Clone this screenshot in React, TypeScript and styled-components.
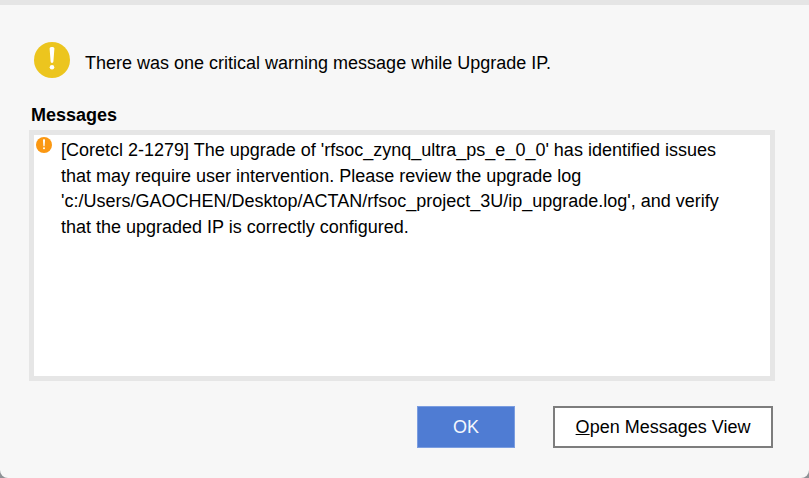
import React from "react";
import styled, { createGlobalStyle } from "styled-components";

const Global = createGlobalStyle`
  html, body { margin: 0; padding: 0; background: #8f9296; }
  #root { width: 809px; height: 478px; overflow: hidden; }
`;

const Dialog = styled.div`
  box-sizing: border-box;
  width: 809px;
  height: 478px;
  background: #f7f7f7;
  border-top: 5px solid #e5e5e5;
  border-radius: 0 0 8px 8px;
  font-family: "Liberation Sans", Arial, sans-serif;
  font-size: 18px;
  color: #000;
  padding: 37px 34px 0 29px;
  display: flex;
  flex-direction: column;
`;

const Header = styled.div`
  display: flex;
  align-items: center;
  gap: 15px;
  height: 36px;
  padding-left: 5px;
`;

const HeaderText = styled.span`
  line-height: 20px;
  position: relative;
  top: 3px;
`;

const SectionTitle = styled.div`
  font-weight: 700;
  line-height: 20px;
  margin-top: 27px;
  padding-left: 2px;
  height: 25px;
`;

const MessagePanel = styled.div`
  box-sizing: border-box;
  height: 251px;
  background: #fff;
  border: 5px solid #e6e6e6;
  padding: 2px 40px 0 2px;
  display: flex;
  gap: 9px;
`;

const MessageIcon = styled.div`
  flex: none;
  width: 16px;
  height: 16px;
`;

const MessageText = styled.div`
  padding-top: 1px;
  line-height: 25.5px;
  white-space: pre-line;
`;

const Footer = styled.div`
  display: flex;
  justify-content: flex-end;
  gap: 38px;
  margin-top: 25px;
  padding-right: 2px;
`;

const BaseButton = styled.button`
  box-sizing: border-box;
  height: 42px;
  padding: 0;
  font-family: inherit;
  font-size: 18px;
  cursor: pointer;
`;

const PrimaryButton = styled(BaseButton)`
  width: 98px;
  background: #4f7cd3;
  border: 1px solid #7b9de0;
  color: #f4f7fd;
`;

const SecondaryButton = styled(BaseButton)`
  width: 220px;
  background: #fff;
  border: 2px solid #7d7d7d;
  color: #000;
`;

const Mnemonic = styled.span`
  text-decoration: underline;
`;

const WarningBadge = ({ size, fill }: { size: number; fill: string }) => (
  <svg width={size} height={size} viewBox="0 0 36 36" aria-hidden="true">
    <circle cx="18" cy="18" r="18" fill={fill} />
    <path
      d="M15.6 6.6a1.6 1.6 0 0 1 1.6-1.6h1.6a1.6 1.6 0 0 1 1.6 1.6L19.4 19.6a1.4 1.4 0 0 1-2.8 0Z"
      fill="#fff"
    />
    <circle cx="18" cy="25.2" r="2.3" fill="#fff" />
  </svg>
);

export default function App() {
  return (
    <>
      <Global />
      <Dialog>
        <Header>
          <WarningBadge size={36} fill="#ecc51e" />
          <HeaderText>There was one critical warning message while Upgrade IP.</HeaderText>
        </Header>
        <SectionTitle>Messages</SectionTitle>
        <MessagePanel>
          <MessageIcon>
            <WarningBadge size={16} fill="#fb9812" />
          </MessageIcon>
          <MessageText>
            {"[Coretcl 2-1279] The upgrade of 'rfsoc_zynq_ultra_ps_e_0_0' has identified issues\nthat may require user intervention. Please review the upgrade log\n'c:/Users/GAOCHEN/Desktop/ACTAN/rfsoc_project_3U/ip_upgrade.log', and verify\nthat the upgraded IP is correctly configured."}
          </MessageText>
        </MessagePanel>
        <Footer>
          <PrimaryButton>OK</PrimaryButton>
          <SecondaryButton>
            <Mnemonic>O</Mnemonic>pen Messages View
          </SecondaryButton>
        </Footer>
      </Dialog>
    </>
  );
}
